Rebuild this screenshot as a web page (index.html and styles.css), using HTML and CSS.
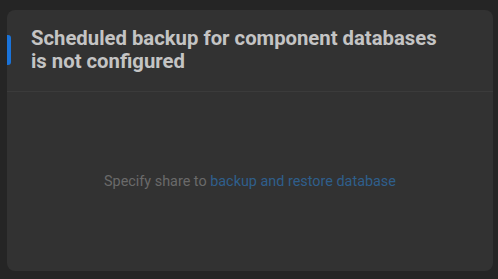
FILE: index.html
```html
<!DOCTYPE html>
<html>
<head>
<meta charset="utf-8">
<link rel="stylesheet" href="styles.css">
</head>
<body>
<div class="card">
  <div class="card-header">
    <span class="accent"></span>
    <h2 class="title">Scheduled backup for component databases is not configured</h2>
  </div>
  <div class="card-body">
    <p class="message">Specify share to <a class="link" href="#">backup and restore database</a></p>
  </div>
</div>
</body>
</html>
```
FILE: styles.css
```css
html, body {
  margin: 0;
  padding: 0;
  background: #252525;
}
body {
  padding: 10px 5px 8px 7px;
  font-family: Roboto, "Noto Sans", sans-serif;
}
.card {
  width: 486px;
  height: 261px;
  box-sizing: border-box;
  background: #323232;
  border-radius: 8px;
  display: flex;
  flex-direction: column;
}
.card-header {
  position: relative;
  padding: 17px 50px 18px 24px;
  border-bottom: 1px solid #3b3b3b;
}
.accent {
  position: absolute;
  left: 0;
  top: 25px;
  width: 4px;
  height: 30px;
  background: #1a73d9;
  border-radius: 0 3px 3px 0;
}
.title {
  margin: 0;
  font-size: 20.3px;
  line-height: 23px;
  font-weight: 700;
  color: #c4c4c4;
}
.card-body {
  flex: 1;
  display: flex;
  align-items: center;
  justify-content: center;
}
.message {
  margin: 0;
  font-size: 14.4px;
  line-height: 20px;
  color: #6a6a6a;
}
.link {
  color: #2f5f8c;
  text-decoration: none;
}
```
